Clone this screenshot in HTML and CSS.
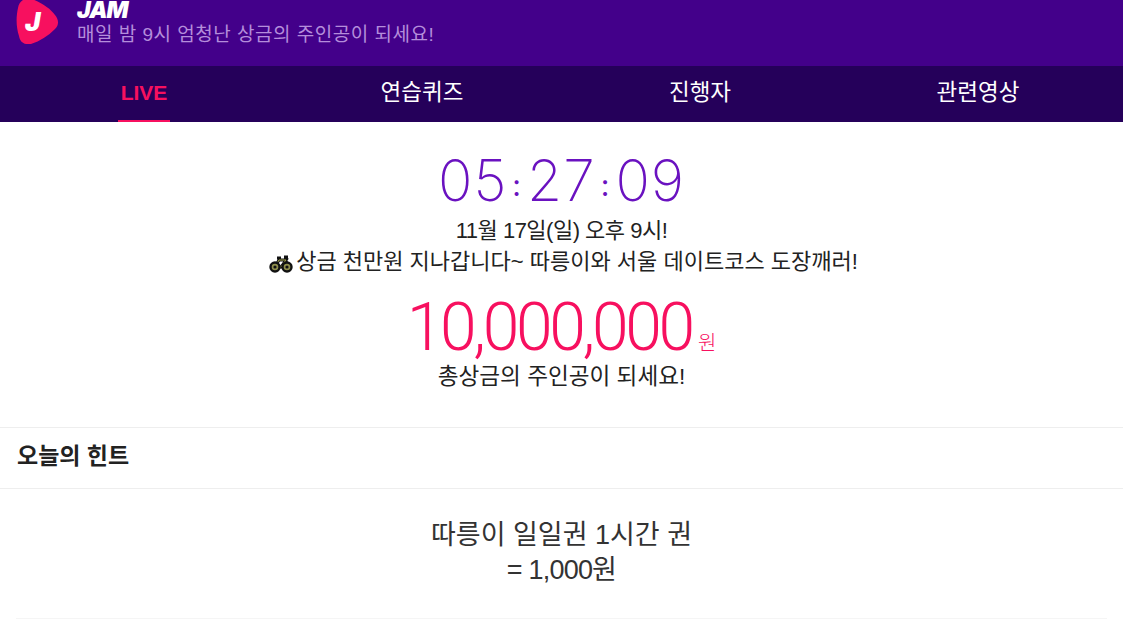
FILE: index.html
```html
<!DOCTYPE html>
<html lang="ko">
<head>
  <meta charset="UTF-8">
  <title>JAM</title>
  <link rel="stylesheet" href="styles.css">
</head>
<body>
  <!-- 상단 헤더 -->
  <header class="header">
    <div class="logo">
      <svg class="logo-mark" width="42" height="46" viewBox="0 0 42 46">
        <path d="M2 10 C3 3 9 -1 16 1 C26 5 35 11 39 17 C43 22 43 27 39 31 C32 38 24 43 15 46 C8 47 4 44 3 38 C0 29 0 19 2 10 Z" fill="#f7105f"/>
      </svg>
      <span class="logo-letter">J</span>
    </div>
    <div class="header-text">
      <div class="brand">JAM</div>
      <div class="slogan">매일 밤 9시 엄청난 상금의 주인공이 되세요!</div>
    </div>
  </header>

  <!-- 탭 메뉴 -->
  <nav class="tabs">
    <a class="tab active"><span>LIVE</span></a>
    <a class="tab"><span>연습퀴즈</span></a>
    <a class="tab"><span>진행자</span></a>
    <a class="tab"><span>관련영상</span></a>
  </nav>

  <!-- 카운트다운 -->
  <section class="live">
    <div class="timer">05<i>:</i>27<i>:</i>09</div>
    <p class="info info-date">11월 17일(일) 오후 9시!</p>
    <p class="info info-event">
      <svg class="bike" width="24" height="18" viewBox="0 0 24 18">
        <path d="M6 12 L10 5 L17 5 L12 12 Z M17 5 L18 12 M8 3 L12 3 M15 2 L19 2" fill="none" stroke="#111" stroke-width="3"/>
        <path d="M6 12 L10 5 L17 5 L12 12 Z" fill="none" stroke="#a8a84a" stroke-width="1"/>
        <circle cx="6" cy="12" r="4.5" fill="#8f8f4c" stroke="#111" stroke-width="2.4"/>
        <circle cx="18" cy="12" r="4.5" fill="#8f8f4c" stroke="#111" stroke-width="2.4"/>
        <circle cx="6" cy="12" r="1.6" fill="#111"/>
        <circle cx="18" cy="12" r="1.6" fill="#111"/>
      </svg>상금 천만원 지나갑니다~ 따릉이와 서울 데이트코스 도장깨러!
    </p>
    <div class="prize">10,000,000<span class="won">원</span></div>
    <p class="prize-text">총상금의 주인공이 되세요!</p>
  </section>

  <!-- 오늘의 힌트 -->
  <section class="hint">
    <h2 class="hint-title">오늘의 힌트</h2>
    <div class="hint-body">
      <p>따릉이 일일권 1시간 권</p>
      <p class="hint-price">= 1,000원</p>
    </div>
  </section>
</body>
</html>
```

FILE: styles.css
```css
html, body {
  height: 621px;
  overflow: hidden;
}

body {
  margin: 0;
  background: #fff;
  color: #222;
  font-family: "Liberation Sans", "Noto Sans CJK KR", sans-serif;
}

p {
  margin: 0;
}

.header {
  display: flex;
  height: 66px;
  padding-left: 16px;
  background: #43008a;
  overflow: hidden;
}

.logo {
  position: relative;
  width: 42px;
  height: 46px;
  margin-top: -2px;
  flex: none;
}

.logo-mark {
  display: block;
}

.logo-letter {
  position: absolute;
  left: 9px;
  top: 9px;
  color: #fff;
  font-family: Inter, "Liberation Sans", sans-serif;
  font-size: 26px;
  line-height: 30px;
  font-weight: 900;
  font-style: italic;
}

.header-text {
  margin-left: 19px;
}

.brand {
  color: #fff;
  font-family: Inter, "Liberation Sans", sans-serif;
  font-size: 23px;
  line-height: 20px;
  font-weight: 900;
  font-style: italic;
  letter-spacing: -1px;
}

.slogan {
  margin-top: 2px;
  color: #b48ddb;
  font-size: 19px;
  line-height: 26px;
  letter-spacing: 0.5px;
}

.tabs {
  display: grid;
  grid-template-columns: repeat(4, 278px);
  height: 56px;
  padding-left: 5px;
  background: #25005a;
}

.tab {
  display: flex;
  justify-content: center;
  color: #fff;
  font-size: 22.5px;
}

.tab span {
  display: block;
  height: 54px;
  line-height: 54px;
}

.tab.active span {
  padding: 0 3px;
  border-bottom: 2px solid #f7105f;
  color: #f7105f;
  font-size: 21px;
  font-weight: 700;
}

.live {
  height: 305px;
  text-align: center;
}

.timer {
  padding-top: 34px;
  color: #6a12c0;
  font-family: Inter, "Liberation Sans", sans-serif;
  font-size: 57px;
  font-weight: 200;
  line-height: 50px;
  letter-spacing: 1px;
}

.timer i {
  position: relative;
  top: -5px;
  margin: 0 5px;
  font-size: 30px;
  font-style: normal;
  font-weight: 400;
}

.info {
  font-size: 22px;
  line-height: 31px;
}

.info-date {
  letter-spacing: -0.5px;
}

.info-event {
  padding-left: 4px;
}

.bike {
  margin-right: 3px;
  vertical-align: -4px;
}

.prize {
  margin-top: 16px;
  color: #f7105f;
  font-family: Roboto, "Liberation Sans", sans-serif;
  font-size: 66px;
  font-weight: 300;
  line-height: 70px;
  letter-spacing: -3.3px;
}

.won {
  margin-left: 6px;
  font-family: "Liberation Sans", "Noto Sans CJK KR", sans-serif;
  font-size: 20px;
  line-height: 1;
  letter-spacing: 0;
}

.prize-text {
  font-size: 22.6px;
  line-height: 28px;
}

.hint {
  border-top: 1px solid #eee;
}

.hint-title {
  margin: 0;
  padding: 0 17px;
  height: 60px;
  border-bottom: 1px solid #eee;
  font-size: 23px;
  line-height: 57px;
}

.hint-body {
  margin: 0 16px;
  padding: 29px 0 30px;
  border-bottom: 1px solid #f5f5f5;
  color: #333;
  font-size: 27px;
  line-height: 35px;
  text-align: center;
}

.hint-price {
  letter-spacing: -0.8px;
}
```
